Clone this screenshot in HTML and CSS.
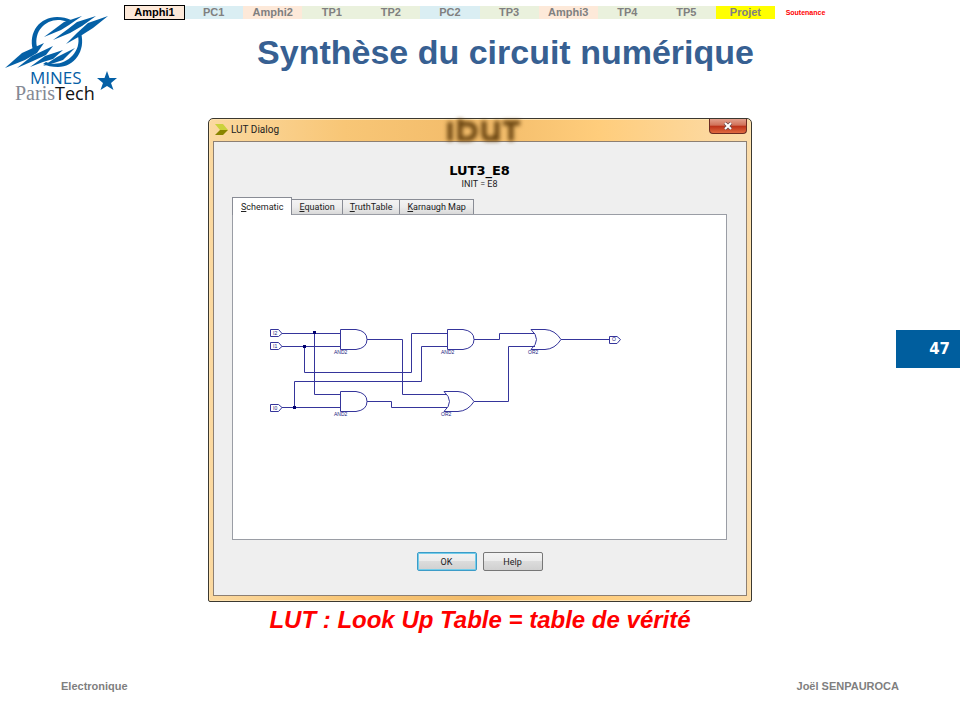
FILE: index.html
```html
<!DOCTYPE html>
<html lang="fr">
<head>
<meta charset="utf-8">
<meta name="viewport" content="width=device-width, initial-scale=1">
<title>Synthèse du circuit numérique</title>
<link rel="stylesheet" href="styles.css">
</head>
<body>
<div class="slide">
  <header class="header">
    <svg class="logo" viewBox="0 0 125 110" role="img" aria-label="MINES ParisTech">
      <g fill="#0460a6">
        <path d="M33 50C28 32 40 17 57 17Q65 17 71 20L67 22C51 15 33 28 37 47Z"/>
        <path d="M81 33C86 51 74 67 58 67Q49 67 43 64L46 62C62 69 82 54 78 36Z"/>
        <path d="M44 37L64 22L82 16L69 25L61 30Z"/>
        <path d="M53 40L68 29L77 22L96 16L82 26L70 33Z"/>
        <path d="M66 44L77 33L88 23L108 16L93 28L82 35Z"/>
        <path d="M5 68L22 53L44 43L37 53L25 60Z"/>
        <path d="M17 68L32 56L53 46L46 55L33 61Z"/>
        <path d="M30 67L45 56L63 50L53 59L43 62Z"/>
        <path d="M43 66L57 57L75 48L63 60L54 63Z"/>
        <path d="M107 71L109.500 78H117L111 83L113.500 90L107 86L100.500 90L103 83L97 78H104.500Z"/>
      </g>
      <text class="logo-mines" x="30" y="84">MINES</text>
      <text class="logo-paris" x="15" y="100">Paris<tspan class="logo-tech">Tech</tspan></text>
    </svg>
    <div class="heading">
      <nav class="nav" aria-label="Séances">
        <a class="nav-item amphi current" href="#" aria-current="page">Amphi1</a>
        <a class="nav-item pc" href="#">PC1</a>
        <a class="nav-item amphi" href="#">Amphi2</a>
        <a class="nav-item tp" href="#">TP1</a>
        <a class="nav-item tp" href="#">TP2</a>
        <a class="nav-item pc" href="#">PC2</a>
        <a class="nav-item tp" href="#">TP3</a>
        <a class="nav-item amphi" href="#">Amphi3</a>
        <a class="nav-item tp" href="#">TP4</a>
        <a class="nav-item tp" href="#">TP5</a>
        <a class="nav-item projet" href="#">Projet</a>
        <a class="nav-item soutenance" href="#">Soutenance</a>
      </nav>
      <h1 class="title">Synthèse du circuit numérique</h1>
    </div>
  </header>

  <main class="main">
    <section class="dialog" aria-label="LUT Dialog">
      <div class="titlebar">
        <svg class="app-icon" viewBox="0 0 13 12" aria-hidden="true">
          <path d="M0 0H8L13 6H5Z" fill="#cbd23c"/>
          <path d="M5 6H13L8 11H0Z" fill="#8a8500"/>
        </svg>
        <span class="dialog-name">LUT Dialog</span>
        <svg class="ghost" viewBox="0 0 84 22" aria-hidden="true">
          <g fill="none" stroke="#694410" stroke-width="5">
            <path d="M7 3V24M17 0V24M17 5H24Q32 5 32 12T24 20H17M41 2V14Q41 20 47 20T54 14V2M54 12V24M60 4H77M68 4V24"/>
          </g>
        </svg>
        <button class="close" type="button" aria-label="Fermer">
          <svg viewBox="0 0 10 8" aria-hidden="true">
            <path d="M2 1L8 7M8 1L2 7" stroke="#6b4a4a" stroke-width="3.500"/>
            <path d="M2 1L8 7M8 1L2 7" stroke="#fff" stroke-width="2"/>
          </svg>
        </button>
      </div>
      <div class="dialog-body">
        <h2 class="lut-name">LUT3_E8</h2>
        <p class="lut-init">INIT = E8</p>
        <div class="tabs" role="tablist">
          <button class="tab selected" type="button" role="tab" aria-selected="true"><u>S</u>chematic</button>
          <button class="tab" type="button" role="tab" aria-selected="false"><u>E</u>quation</button>
          <button class="tab" type="button" role="tab" aria-selected="false"><u>T</u>ruthTable</button>
          <button class="tab" type="button" role="tab" aria-selected="false"><u>K</u>arnaugh Map</button>
        </div>
        <div class="panel" role="tabpanel">
          <svg class="schematic" viewBox="233 215 493 324" role="img" aria-label="Schéma de la LUT">
            <g class="wires">
              <path d="M282 333.500H340.500M282 346.500H340.500M314.500 333.500V394.500H340.500M304.500 346.500V372.500H411.500V333.500H447.500"/>
              <path d="M282 407.500H340.500M294.500 407.500V381.500H421.500V346.500H447.500"/>
              <path d="M367 339.500H402.500V394.500H447M367 401.500H391.500V407.500H447"/>
              <path d="M474 339.500H499.500V333.500H535M474 401.500H508.500V346.500H535M561 339.500H609.500"/>
              <path d="M340.500 329.500H356Q367 331 367 339.500T356 349.500H340.500Z"/>
              <path d="M447.500 329.500H463Q474 331 474 339.500T463 349.500H447.500Z"/>
              <path d="M340.500 391.500H356Q367 393 367 401.500T356 411.500H340.500Z"/>
              <path d="M531 329.500H545Q555 330 561 339.500Q555 349 545 349.500H531Q542 339.500 531 329.500Z"/>
              <path d="M444 391.500H458Q468 392 474 401.500Q468 411 458 411.500H444Q455 401.500 444 391.500Z"/>
              <path d="M270.500 329.500H278.500L282 333.500L278.500 336.500H270.500ZM270.500 342.500H278.500L282 346.500L278.500 349.500H270.500ZM270.500 404.500H278.500L282 407.500L278.500 411.500H270.500ZM609.500 336.500H617L620.500 339.500L617 343.500H609.500Z"/>
            </g>
            <g class="nodes">
              <rect x="313" y="331" width="3" height="3"/>
              <rect x="303" y="345" width="3" height="3"/>
              <rect x="293" y="406" width="3" height="3"/>
            </g>
            <g class="labels">
              <text x="273" y="335">I2</text>
              <text x="273" y="348">I1</text>
              <text x="273" y="410">I0</text>
              <text x="612" y="341">O</text>
              <text x="334" y="354">AND2</text>
              <text x="441" y="354">AND2</text>
              <text x="334" y="416">AND2</text>
              <text x="528" y="354">OR2</text>
              <text x="441" y="416">OR2</text>
            </g>
          </svg>
        </div>
        <div class="actions">
          <button class="button primary" type="button">OK</button>
          <button class="button" type="button">Help</button>
        </div>
      </div>
    </section>
    <div class="page-number">47</div>
    <p class="caption">LUT : Look Up Table = table de vérité</p>
  </main>

  <footer class="footer">
    <span>Electronique</span>
    <span>Joël SENPAUROCA</span>
  </footer>
</div>
</body>
</html>
```
FILE: styles.css
```css
* {
  box-sizing: border-box;
}

body {
  margin: 0;
  background: #fff;
  font-family: "Liberation Sans", Arial, sans-serif;
}

h1, h2, p {
  margin: 0;
}

.slide {
  display: flex;
  flex-direction: column;
  min-height: 100vh;
}

.header {
  display: grid;
  grid-template-columns: 125px 1fr 124px;
  margin-bottom: 8px;
}

.logo {
  display: block;
  width: 125px;
}

.logo-mines {
  fill: #0460a6;
  font: 17px "Open Sans", sans-serif;
}

.logo-paris {
  fill: #858994;
  font: 20px "Liberation Serif", serif;
}

.logo-tech {
  fill: #111;
  font: 18px "Open Sans", sans-serif;
}

.heading {
  padding-top: 6px;
}

.nav {
  display: grid;
  grid-template-columns: repeat(11, 1fr) 61px;
}

.nav-item {
  color: #808080;
  font-size: 11px;
  font-weight: bold;
  line-height: 13px;
  text-align: center;
  text-decoration: none;
}

.amphi {
  background: #fde9d9;
}

.pc {
  background: #daeef3;
}

.tp {
  background: #eaf1dd;
}

.projet {
  background: #ff0;
}

.current {
  position: relative;
  color: #000;
  outline: 1px solid #000;
}

.soutenance {
  color: #f00;
  font-size: 7px;
}

.title {
  margin-top: 13px;
  padding-left: 50px;
  color: #376092;
  font-size: 34px;
  line-height: 40px;
  text-align: center;
}

.main {
  display: grid;
  grid-template-columns: 1fr minmax(0, 544px) 1fr;
}

.dialog {
  grid-column: 2;
  padding: 0 4px 5px;
  border: 1px solid #3b3830;
  border-radius: 5px 5px 2px 2px;
  background: linear-gradient(90deg, #fbd9a0, #f8c676 25%, #f2bb69 50%, #ffcd7c 72%, #fbdcaa);
  box-shadow: inset 0 0 0 1px #ffe3b0;
  font-family: Roboto, sans-serif;
}

.titlebar {
  position: relative;
  display: flex;
  align-items: center;
  height: 22px;
  padding-left: 2px;
}

.app-icon {
  width: 13px;
  height: 12px;
}

.dialog-name {
  margin-left: 3px;
  color: #222;
  font-size: 10px;
  line-height: 14px;
}

.ghost {
  position: absolute;
  top: 0;
  left: 230px;
  width: 84px;
  height: 22px;
  filter: blur(2px);
}

.close {
  display: flex;
  align-items: center;
  justify-content: center;
  align-self: flex-start;
  width: 38px;
  height: 15px;
  margin-left: auto;
  padding: 0;
  border: 1px solid #6c2c22;
  border-top: 0;
  border-radius: 0 0 4px 4px;
  background: linear-gradient(#e3a08c, #d07058 45%, #bb3018 50%, #e06a40);
}

.close svg {
  width: 10px;
  height: 8px;
}

.dialog-body {
  padding: 20px 19px 24px 18px;
  border: 1px solid #8d7f72;
  background: #efefef;
}

.lut-name {
  color: #000;
  font: bold 13px/17px "DejaVu Sans", sans-serif;
  text-align: center;
}

.lut-init {
  color: #222;
  font-size: 9px;
  line-height: 10px;
  text-align: center;
}

.tabs {
  display: flex;
  align-items: flex-end;
  margin-top: 8px;
}

.tab {
  height: 15px;
  margin: 0 0 0 -1px;
  padding: 0 7px;
  border: 1px solid #898c95;
  border-bottom: 0;
  background: linear-gradient(#f3f3f3, #ececec 50%, #d9d9d9);
  color: #222;
  font: 9px/14px Roboto, sans-serif;
}

.tab.selected {
  position: relative;
  height: 18px;
  margin: 0 0 -1px;
  padding: 0 8px;
  background: #fff;
}

.panel {
  border: 1px solid #9a9da5;
  background: #fff;
}

.schematic {
  display: block;
  width: 100%;
}

.wires {
  fill: none;
  stroke: #35359b;
}

.nodes {
  fill: #00006e;
}

.labels {
  fill: #202080;
  font: 5px "Liberation Sans", sans-serif;
}

.actions {
  display: flex;
  justify-content: center;
  gap: 6px;
  margin-top: 12px;
}

.button {
  width: 60px;
  height: 19px;
  padding: 0;
  border: 1px solid #777;
  border-radius: 2px;
  background: linear-gradient(#f3f3f3, #ebebeb 50%, #dcdcdc 50%, #d0d0d0);
  color: #222;
  font: 9px/16px Roboto, sans-serif;
}

.primary {
  border-color: #3c9cc8;
  box-shadow: inset 0 0 0 1px #74cdea;
}

.page-number {
  align-self: center;
  justify-self: end;
  width: 64px;
  margin-bottom: 22px;
  padding-right: 10px;
  background: #005e9e;
  color: #fff;
  font: bold 15px/38px "DejaVu Sans", sans-serif;
  text-align: right;
}

.caption {
  grid-column: 1 / -1;
  margin-top: 4px;
  color: #f00;
  font-size: 24px;
  font-style: italic;
  font-weight: bold;
  line-height: 28px;
  text-align: center;
}

.footer {
  display: flex;
  justify-content: space-between;
  margin-top: auto;
  padding: 0 61px 27px;
  color: #7f7f7f;
  font-size: 11px;
  font-weight: bold;
  line-height: 14px;
}
```
